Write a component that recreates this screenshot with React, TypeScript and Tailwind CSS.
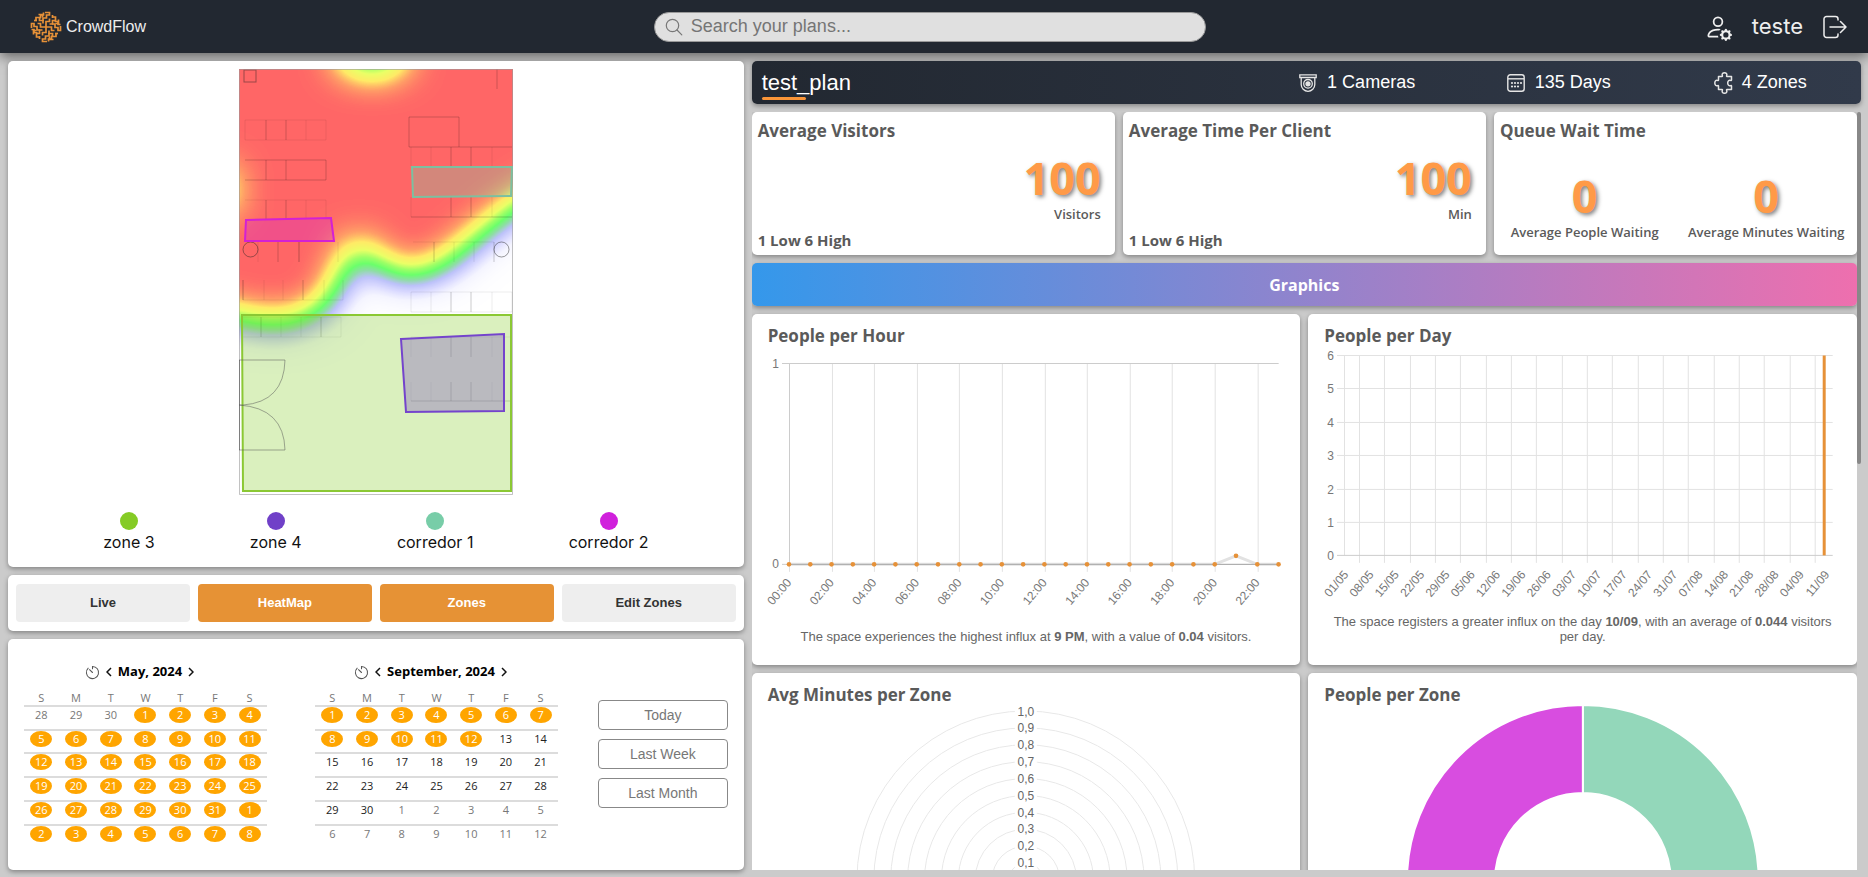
import React from "react";
import { BsPersonGear } from "react-icons/bs";

const card = "rounded-[5px] bg-white shadow-[0_2px_5px_rgba(0,0,0,0.35)]";
const humanist = "font-['Open_Sans','Noto_Sans',sans-serif]";

function Logo() {
  return (
    <svg viewBox="0 0 32 32" className="size-8" fill="none" stroke="#e69138" strokeWidth="1.7" aria-hidden="true">
      {[0, 90, 180, 270].map((a) => (
        <g key={a} transform={`rotate(${a} 16 16)`}>
          <path d="M16 16V10.500H19.500V7.500" />
          <path d="M13 10V7H16.500V4H19.500V1.500H15" />
          <path d="M19.500 13H22.500V9.500H25.500V6H22.500" />
          <path d="M22.500 7V4" />
          <path d="M10.500 7.500V4H13.500V1.500" />
          <path d="M25.500 12.500H28.500V8.500" />
        </g>
      ))}
    </svg>
  );
}

function SearchIcon() {
  return (
    <svg viewBox="0 0 18 18" className="size-[18px]" fill="none" stroke="#777" strokeWidth="1.2" aria-hidden="true">
      <circle cx="7.500" cy="7.500" r="6.200" />
      <path d="M12 12l4.800 4.800" strokeLinecap="round" />
    </svg>
  );
}

function ExitIcon() {
  return (
    <svg viewBox="0 0 24 24" className="size-6" fill="none" stroke="currentColor" strokeWidth="1.500" strokeLinecap="round" strokeLinejoin="round" aria-hidden="true">
      <path d="M15 5V4A2.500 2.500 0 0 0 12.500 1.500H3.500A2.500 2.500 0 0 0 1 4v16A2.500 2.500 0 0 0 3.500 22.500h9A2.500 2.500 0 0 0 15 20V19" />
      <path d="M7 12h16M17.500 6.500L23 12l-5.500 5.500" />
    </svg>
  );
}

function CameraIcon() {
  return (
    <svg viewBox="0 0 18 18" className="size-[18px]" fill="none" stroke="#e5e5e5" strokeWidth="1.300" aria-hidden="true">
      <path d="M.8.800h16.400v2.700H.8z" />
      <path d="M2.200 3.500v7a6.800 6.800 0 0 0 13.600 0v-7" />
      <circle cx="9" cy="9.800" r="4.300" />
      <circle cx="9" cy="9.800" r="2" fill="#e5e5e5" />
    </svg>
  );
}

function CalendarIcon() {
  return (
    <svg viewBox="0 0 18 18" className="size-[18px]" fill="none" stroke="#e5e5e5" strokeWidth="1.400" aria-hidden="true">
      <rect x=".8" y=".8" width="16.400" height="16.400" rx="2.500" />
      <path d="M1 4.800h16" />
      {[
        [8, 9], [11, 9], [14, 9], [5, 12.500], [8, 12.500], [11, 12.500], [5, 9],
      ].map(([x, y], i) => (
        <circle key={i} cx={x} cy={y} r="1.100" fill="#e5e5e5" stroke="none" />
      ))}
    </svg>
  );
}

function ZonesIcon() {
  return (
    <svg viewBox="0 0 20 22" className="h-[22px] w-5" fill="none" stroke="#e5e5e5" strokeWidth="1.500" strokeLinejoin="round" aria-hidden="true">
      <path d="M4.500 4.500H8c.6 0 .5-.5.300-1C7.700 2 8.800.800 10.500.800S13.300 2 12.700 3.500c-.2.500-.3 1 .3 1H17.500V8c0 .6-.5.600-1 .4-1.500-.6-2.800.8-2.800 2.600s1.300 3.200 2.800 2.600c.5-.2 1-.2 1 .4v3.500H13c-.6 0-.5.500-.3 1 .6 1.500-.5 2.700-2.200 2.700s-2.800-1.200-2.200-2.700c.2-.5.300-1-.3-1H4.500V14c0-.6-.5-.6-1-.4C2 14.200.800 12.800.800 11S2 7.800 3.500 8.400c.5.200 1 .2 1-.4z" />
    </svg>
  );
}

function ResetIcon() {
  return (
    <svg viewBox="0 0 16 16" className="size-[15px]" fill="none" stroke="#555" strokeWidth="1.100" strokeLinecap="round" aria-hidden="true">
      <path d="M8 4V1.500A6.500 6.500 0 1 1 3.400 3.400M8 8L4.800 5" />
    </svg>
  );
}

function Chevron({ left = false }: { left?: boolean }) {
  return (
    <svg viewBox="0 0 6 10" className="h-[10px] w-[6px]" fill="none" stroke="#111" strokeWidth="1.500" aria-hidden="true">
      <path d={left ? "M5 1L1 5l4 4" : "M1 1l4 4-4 4"} />
    </svg>
  );
}

const desks = [
  "M6 51H87V71H6zM67 51V71",
  "M6 131H87V150M67 131V150",
  "M19 173V193M60 173V193M99 173V193",
  "M4 211V231H104V211M25 211V231M44 211V231M85 211V231",
  "M3 248H102V268H3zM42 248V268M62 248V268",
  "M172 78V97M192 78V97M253 78V97",
  "M172 128V148M253 128V148",
  "M174 173H255M215 173V193M235 173V193",
  "M172 223H273V243H172zM192 223V243M253 223V243",
  "M172 268H273M172 268V288M192 268V288M253 268V288",
  "M172 313V332M192 313V332M253 313V332",
];

const walls = [
  "M27 51V71M47 51V71",
  "M6 91H87M6 111H87V91M27 91V111M47 91V111",
  "M27 131V150M47 131V150",
  "M39 173V193M60 173V193",
  "M4 211V231M64 211V231",
  "M22 248V268M82 248V268",
  "M170 48H220V78M170 48V78H273M258 0V20",
  "M212 78V97M232 78V97M212 128V148M232 128V148M172 148H273",
  "M195 173V193M255 173V193",
  "M212 223V243M232 223V243M212 268V288M232 268V288M212 313V332M232 313V332M172 332H273",
];

function FloorPlan() {
  return (
    <svg viewBox="0 0 274 426" className="h-[426px] max-w-full" role="img" aria-label="Floor plan heat map">
      <defs>
        <filter id="heat" filterUnits="userSpaceOnUse" x="-110" y="-110" width="500" height="660" colorInterpolationFilters="sRGB">
          <feGaussianBlur stdDeviation="20" />
          <feComponentTransfer>
            <feFuncR type="table" tableValues="1 .96 .85 .74 .56 .42 .62 .92 1 1 1" />
            <feFuncG type="table" tableValues="1 .96 .85 .76 .87 1 1 1 .92 .62 .4" />
            <feFuncB type="table" tableValues="1 1 1 .98 .65 .42 .4 .4 .4 .4 .4" />
          </feComponentTransfer>
        </filter>
        <clipPath id="plan">
          <rect width="274" height="426" />
        </clipPath>
      </defs>
      <g clipPath="url(#plan)">
        <g filter="url(#heat)">
          <rect x="-200" y="-200" width="700" height="900" fill="#000" />
          <path fill="#fff" d="M-140 -140H420V48L273 143L247 164L220 187Q200 206 177 209Q148 212 132 192Q121 160 113 180L104 208Q94 238 78 246Q58 259 33 258Q13 256 0 251L-60 240L-140 230z" />
          <ellipse cx="133" cy="-20" rx="32" ry="20" fill="#000" />
          <ellipse cx="-22" cy="121" rx="12" ry="18" fill="#000" />
        </g>
      </g>
      <g fill="none" stroke="#000" strokeOpacity=".07" strokeWidth="1">
        {desks.map((d) => (
          <path key={d} d={d} />
        ))}
      </g>
      <g fill="none" stroke="#000" strokeOpacity=".2" strokeWidth="1">
        {walls.map((d) => (
          <path key={d} d={d} />
        ))}
      </g>
      <g fill="none" stroke="#222" strokeOpacity=".45" strokeWidth="1">
        <rect x="5" y="1" width="12" height="12" />
        <circle cx="11.500" cy="180.500" r="7.500" />
        <circle cx="262.500" cy="180.500" r="7.500" />
      </g>
      <path d="M.5.500H273.500V425.500H.5z" fill="none" stroke="#999" strokeOpacity=".6" />
      <path d="M3 246H272V422H4z" fill="#84cc29" fillOpacity=".3" stroke="#8bc834" strokeWidth="2" />
      <path d="M162 270L265 265V342L167 343z" fill="#7e55c4" fillOpacity=".35" stroke="#7444cc" strokeWidth="2" />
      <path d="M173 98H273L272 127L174 128z" fill="#77cca7" fillOpacity=".32" stroke="#7cc0a0" strokeWidth="2" />
      <path d="M7 151L92 149L95 172H6z" fill="#d020d8" fillOpacity=".3" stroke="#d420d4" strokeWidth="2" />
      <path d="M0 291H46Q45 333 4 336H0Q45 339 46 381H0zM.5 291V381" fill="none" stroke="#555" strokeOpacity=".5" />
    </svg>
  );
}

const zones = [
  { name: "zone 3", color: "bg-[#85cb25]" },
  { name: "zone 4", color: "bg-[#7040c8]" },
  { name: "corredor 1", color: "bg-[#78cda8]" },
  { name: "corredor 2", color: "bg-[#d020dc]" },
];

type Day = { n: number; kind: "on" | "in" | "out" };

const range = (a: number, b: number, kind: Day["kind"]): Day[] =>
  Array.from({ length: b - a + 1 }, (_, i) => ({ n: a + i, kind }));

const may = [...range(28, 30, "out"), ...range(1, 31, "on"), ...range(1, 8, "on")];
const september = [...range(1, 12, "on"), ...range(13, 30, "in"), ...range(1, 12, "out")];

const dayStyle = {
  on: "bg-[#ffa500] text-white",
  in: "text-[#222]",
  out: "text-[#777]",
};

function Calendar({ title, days }: { title: string; days: Day[] }) {
  return (
    <div className={`w-[243px] text-[11px] ${humanist}`}>
      <div className="flex h-6 items-center justify-center gap-[6px] pr-3">
        <button aria-label="Reset"><ResetIcon /></button>
        <button aria-label="Previous month"><Chevron left /></button>
        <h3 className="text-[13px] font-bold text-black">{title}</h3>
        <button aria-label="Next month"><Chevron /></button>
      </div>
      <table className="mt-[7px] h-[156px] w-full table-fixed border-collapse text-center">
        <thead>
          <tr className="h-[14px] text-[#777]">
            {"SMTWTFS".split("").map((d, i) => (
              <th key={i} className="p-0 leading-[14px] font-normal">{d}</th>
            ))}
          </tr>
        </thead>
        <tbody>
          {[0, 1, 2, 3, 4, 5].map((w) => (
            <tr key={w} className="border-t-2 border-[#dcdcdc]">
              {days.slice(w * 7, w * 7 + 7).map((d, i) => (
                <td key={i} className="p-0 align-top">
                  <span className={`mx-auto block h-4 w-[22px] rounded-[50%] leading-4 ${dayStyle[d.kind]}`}>{d.n}</span>
                </td>
              ))}
            </tr>
          ))}
        </tbody>
      </table>
    </div>
  );
}

const bigNumber = "font-['Noto_Sans',sans-serif] text-[45px] leading-[52px] font-bold text-[#ff9a47] [text-shadow:2px_2px_4px_rgba(0,0,0,0.5)]";

function Stat({ title, unit }: { title: string; unit: string }) {
  return (
    <section className={`${card} ${humanist} flex h-[143px] flex-col justify-between px-[6px] pt-[5px] pb-[3px] font-bold text-[#5a5a5a]`}>
      <h2 className="text-[17px] leading-7">{title}</h2>
      <div className="pt-[3px] pr-2 text-right">
        <p className={bigNumber}>100</p>
        <p className="text-[13px] leading-5 font-semibold">{unit}</p>
      </div>
      <p className="text-[15px] leading-6">1 Low 6 High</p>
    </section>
  );
}

function Waiting({ label }: { label: string }) {
  return (
    <div className="text-center">
      <p className={bigNumber}>0</p>
      <p className="text-[13px] leading-5 font-semibold whitespace-nowrap">{label}</p>
    </div>
  );
}

const axisText = "fill-[#777] text-[12px]";

function HourChart() {
  const x = (i: number) => 37 + i * 21.300;
  return (
    <svg viewBox="0 0 549 264" className="block w-full" role="img" aria-label="People per hour">
      <g stroke="#e2e2e2" strokeWidth="1">
        {Array.from({ length: 12 }, (_, i) => (
          <path key={i} d={`M${Math.round(x(i * 2)) + 0.5} 13.500V222`} />
        ))}
      </g>
      <path d="M30 13.500H527M30 214.500H527M37.500 13.500V214.500" stroke="#ccc" fill="none" />
      <path d={`M37 214.500H${x(20)}L${x(21)} 206L${x(22)} 214.500H527`} stroke="#e2e2e2" strokeWidth="3" fill="none" />
      <path d="M37 214.500H527" stroke="#aaa" />
      {Array.from({ length: 24 }, (_, i) => (
        <circle key={i} cx={x(i)} cy={i === 21 ? 206 : 214.500} r="2.300" fill="#e69138" />
      ))}
      <g className={axisText} textAnchor="end">
        <text x="27" y="18">1</text>
        <text x="27" y="218">0</text>
        {Array.from({ length: 12 }, (_, i) => (
          <text key={i} transform={`translate(${x(i * 2) + 3} 233) rotate(-50)`}>{`${String(i * 2).padStart(2, "0")}:00`}</text>
        ))}
      </g>
    </svg>
  );
}

const dates = ["01/05", "08/05", "15/05", "22/05", "29/05", "05/06", "12/06", "19/06", "26/06", "03/07", "10/07", "17/07", "24/07", "31/07", "07/08", "14/08", "21/08", "28/08", "04/09", "11/09"];

function DayChart() {
  return (
    <svg viewBox="0 0 549 264" className="block w-full" role="img" aria-label="People per day">
      <g stroke="#e2e2e2" strokeWidth="1">
        <path d="M36.500 5.500V205.500" />
        {dates.slice(1).map((d, i) => (
          <path key={d} d={`M${Math.round(51 + i * 25.330) + 0.5} 5.500V213`} />
        ))}
        {[0, 1, 2, 3, 4, 5].map((i) => (
          <path key={i} d={`M29 ${Math.round(i * 33.400) + 5.500}H525`} />
        ))}
      </g>
      <path d="M29 205.500H525" stroke="#ccc" />
      <path d="M516.500 5.500V205.500" stroke="#e69138" strokeWidth="3" />
      <g className={axisText} textAnchor="end">
        {[6, 5, 4, 3, 2, 1, 0].map((n, i) => (
          <text key={n} x="26" y={Math.round(i * 33.400) + 10}>{n}</text>
        ))}
        {dates.map((d, i) => (
          <text key={d} transform={`translate(${41 + i * 25.330} 225) rotate(-50)`}>{d}</text>
        ))}
      </g>
    </svg>
  );
}

function RadialChart() {
  return (
    <svg viewBox="0 0 549 350" className="block w-full overflow-visible" role="img" aria-label="Average minutes per zone">
      {Array.from({ length: 10 }, (_, i) => (
        <circle key={i} cx="274" cy="171" r={(i + 1) * 16.900} fill="none" stroke="#e8e8e8" />
      ))}
      {Array.from({ length: 10 }, (_, i) => (
        <g key={i}>
          <rect x="263" y={162 - (i + 1) * 16.850} width="22" height="16" fill="#fff" />
          <text x="274" y={175 - (i + 1) * 16.850} textAnchor="middle" className="fill-[#666] text-[12px]">{i === 9 ? "1,0" : `0,${i + 1}`}</text>
        </g>
      ))}
    </svg>
  );
}

function DonutChart() {
  return (
    <svg viewBox="0 0 549 350" className="block w-full overflow-visible" role="img" aria-label="People per zone">
      <path d="M275 -4A176 176 0 0 1 275 348V260A88 88 0 0 0 275 84z" fill="#93d7ba" stroke="#fff" strokeWidth="2" />
      <path d="M275 -4A176 176 0 0 0 275 348V260A88 88 0 0 1 275 84z" fill="#d84de0" stroke="#fff" strokeWidth="2" />
    </svg>
  );
}

function Panel({ title, children, className = "" }: { title: string; children: React.ReactNode; className?: string }) {
  return (
    <section className={`${card} pt-2 ${className}`}>
      <h2 className={`px-4 text-[17px] leading-7 font-bold text-[#5a5a5a] ${humanist}`}>{title}</h2>
      {children}
    </section>
  );
}

const toggle = "h-[38px] rounded-[4px] text-[13px] font-bold";

export default function App() {
  return (
    <div className="flex h-screen flex-col overflow-hidden bg-[#cbcbcb] font-['Liberation_Sans',Arial,sans-serif]">
      <header className="grid h-[53px] shrink-0 grid-cols-[1fr_29.7%_1fr] items-center bg-[#222831] pr-2 text-[#eee] shadow-[0_4px_12px_rgba(0,0,0,0.5)]">
        <a href="#" className="flex items-center gap-1 pl-[30px] text-[16px]">
          <Logo />
          CrowdFlow
        </a>
        <label className="flex h-[30px] items-center gap-2 rounded-full border border-[#999] bg-[#e0e0e0] px-[10px]">
          <SearchIcon />
          <input type="search" aria-label="Search your plans" placeholder="Search your plans..." className="min-w-0 flex-1 bg-transparent text-[18px] text-[#333] outline-none placeholder:text-[#757575]" />
        </label>
        <div className="flex items-center justify-end gap-5 pr-[13px]">
          <button aria-label="Account settings"><BsPersonGear className="size-7" /></button>
          <span className="font-['Inter',sans-serif] text-[22px]">teste</span>
          <button aria-label="Log out"><ExitIcon /></button>
        </div>
      </header>

      <main className="flex min-h-0 flex-1 gap-2 pt-2 pr-[7px] pb-[7px] pl-2">
        <div className="flex w-[39.7%] shrink-0 flex-col gap-2">
          <section className={`${card} flex min-h-0 flex-1 flex-col items-center pt-2`}>
            <FloorPlan />
            <ul className="mt-[17px] flex w-full justify-evenly font-['Inter',sans-serif] text-[16px] leading-6 text-[#111]">
              {zones.map((z) => (
                <li key={z.name} className="flex flex-col items-center">
                  <span className={`size-[18px] rounded-full ${z.color}`} />
                  {z.name}
                </li>
              ))}
            </ul>
          </section>

          <div className={`${card} grid h-14 grid-cols-4 items-center gap-2 px-2`}>
            <button className={`${toggle} bg-[#eee] text-[#333]`}>Live</button>
            <button className={`${toggle} bg-[#e69235] text-white`}>HeatMap</button>
            <button className={`${toggle} bg-[#e69235] text-white`}>Zones</button>
            <button className={`${toggle} bg-[#eee] text-[#333]`}>Edit Zones</button>
          </div>

          <section className={`${card} flex h-[231px] items-start gap-12 px-4 pt-[21px]`}>
            <Calendar title="May, 2024" days={may} />
            <Calendar title="September, 2024" days={september} />
            <div className="-ml-2 mt-10 flex flex-1 flex-col gap-[9px] text-[14px] text-[#777]">
              <button className="h-[30px] rounded-[4px] border border-[#888]">Today</button>
              <button className="h-[30px] rounded-[4px] border border-[#888]">Last Week</button>
              <button className="h-[30px] rounded-[4px] border border-[#888]">Last Month</button>
            </div>
          </section>
        </div>

        <div className="flex min-w-0 flex-1 flex-col gap-2">
          <div className="flex h-[43px] shrink-0 items-center justify-between rounded-[5px] bg-linear-to-r/srgb from-[#222831] to-[#313a4a] pl-[10px] text-[18px] text-white shadow-[0_2px_5px_rgba(0,0,0,0.35)]">
            <div className="pt-1">
              <h1 className="text-[22px] leading-7">test_plan</h1>
              <div className="h-[3px] w-11 rounded-full bg-[#fa9538]" />
            </div>
            <ul className="grid w-[55%] grid-cols-3">
              <li className="flex items-center justify-center gap-[10px]"><CameraIcon />1 Cameras</li>
              <li className="flex items-center justify-center gap-[10px]"><CalendarIcon />135 Days</li>
              <li className="flex items-center justify-center gap-2"><ZonesIcon />4 Zones</li>
            </ul>
          </div>

          <div className="flex min-h-0 flex-1">
            <div className="flex min-w-0 flex-1 flex-col gap-2 overflow-y-auto [scrollbar-width:none]">
              <div className="grid shrink-0 grid-cols-3 gap-2">
                <Stat title="Average Visitors" unit="Visitors" />
                <Stat title="Average Time Per Client" unit="Min" />
                <section className={`${card} ${humanist} flex h-[143px] flex-col justify-between pt-[5px] pb-[13px] font-bold text-[#5a5a5a]`}>
                  <h2 className="px-[6px] text-[17px] leading-7">Queue Wait Time</h2>
                  <div className="grid grid-cols-2">
                    <Waiting label="Average People Waiting" />
                    <Waiting label="Average Minutes Waiting" />
                  </div>
                </section>
              </div>

              <h2 className={`flex h-[43px] shrink-0 items-center justify-center rounded-[5px] bg-linear-to-r/srgb from-[#3498eb] to-[#ee6fae] text-[16px] font-bold text-white shadow-[0_2px_5px_rgba(0,0,0,0.35)] ${humanist}`}>
                Graphics
              </h2>

              <div className="grid shrink-0 grid-cols-2 gap-2">
                <Panel title="People per Hour" className="h-[351px]">
                  <HourChart />
                  <p className="mt-[15px] px-4 text-center text-[13px] leading-[15px] text-[#666]">
                    The space experiences the highest influx at <b>9 PM</b>, with a value of <b>0.04</b> visitors.
                  </p>
                </Panel>
                <Panel title="People per Day" className="h-[351px]">
                  <DayChart />
                  <p className="px-4 text-center text-[13px] leading-[15px] text-[#666]">
                    The space registers a greater influx on the day <b>10/09</b>, with an average of <b>0.044</b> visitors per day.
                  </p>
                </Panel>
                <Panel title="Avg Minutes per Zone">
                  <RadialChart />
                </Panel>
                <Panel title="People per Zone">
                  <DonutChart />
                </Panel>
              </div>
            </div>
            <div className="w-1 shrink-0" aria-hidden="true">
              <div className="h-[46.5%] rounded-full bg-[#888]" />
            </div>
          </div>
        </div>
      </main>
    </div>
  );
}
